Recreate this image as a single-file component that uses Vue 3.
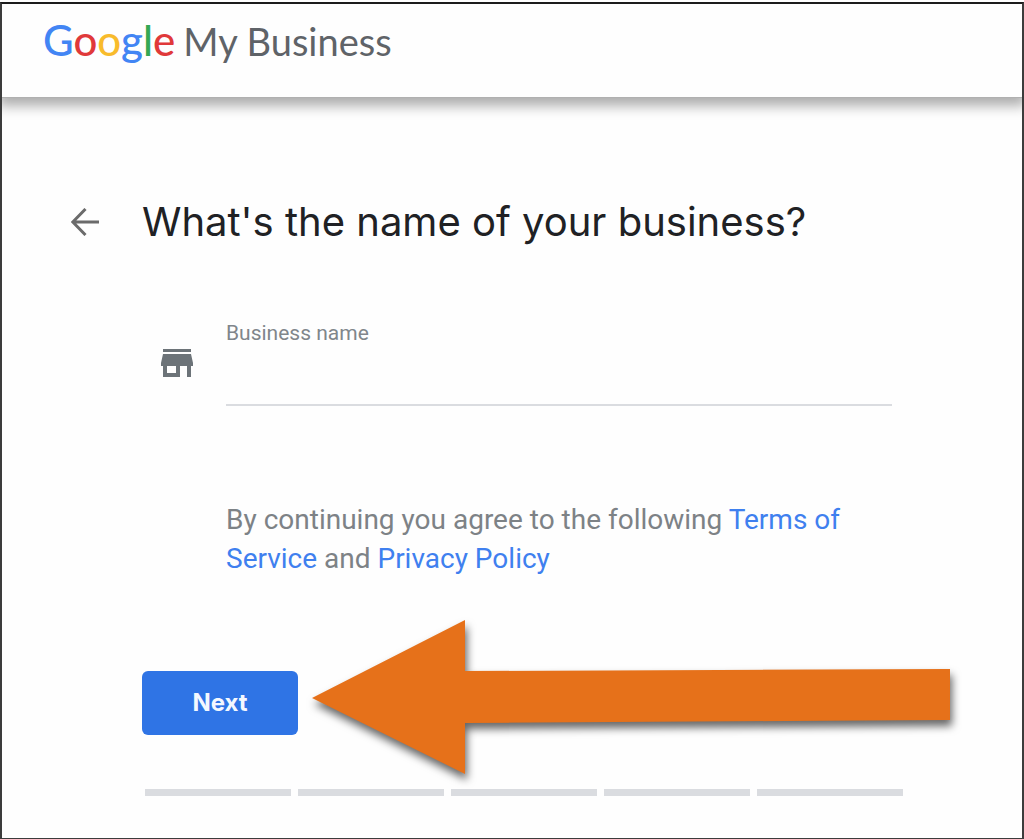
<script setup>
import { ref } from 'vue'

const businessName = ref('')
const logoLetters = [
  { char: 'G', tone: 'blue' },
  { char: 'o', tone: 'red' },
  { char: 'o', tone: 'yellow' },
  { char: 'g', tone: 'blue' },
  { char: 'l', tone: 'green' },
  { char: 'e', tone: 'red' },
]
const stepCount = 5
</script>

<template>
  <div class="page">
    <header class="topbar">
      <div class="brand">
        <span class="google"><span v-for="(l, i) in logoLetters" :key="i" :class="l.tone">{{ l.char }}</span></span>
        <span class="product">My Business</span>
      </div>
    </header>

    <main class="content">
      <div class="title-row">
        <button class="back" type="button" aria-label="Back">
          <svg viewBox="0 0 28 28" width="28" height="28" aria-hidden="true">
            <path d="M28 14H2M14.500 1L1.800 14L14.500 27" fill="none" stroke="#6b6b6b" stroke-width="3" />
          </svg>
        </button>
        <h1>What's the name of your business?</h1>
      </div>

      <form class="form" @submit.prevent>
        <div class="field">
          <svg class="store" viewBox="0 0 34 30" width="34" height="30" aria-hidden="true">
            <path d="M3 1h28v3H3zM3 6h28l2 9v3h-2v11h-4V18h-7v11H3V18H1v-3zM7 18v7h9v-7z" fill="#6c7378" fill-rule="evenodd" />
          </svg>
          <div class="control">
            <label for="business-name">Business name</label>
            <input id="business-name" v-model="businessName" type="text" autocomplete="off" />
          </div>
        </div>

        <p class="terms">
          By continuing you agree to the following <a href="#terms">Terms of Service</a> and
          <a href="#privacy">Privacy Policy</a>
        </p>

        <div class="actions">
          <button class="next" type="submit">Next</button>
          <svg class="arrow" viewBox="0 0 660 180" width="660" height="180" aria-hidden="true">
            <path d="M1 88L154 10V61L639 59V110L154 113V164Z" fill="#e6711a" />
          </svg>
        </div>

        <div class="steps" aria-hidden="true">
          <span v-for="n in stepCount" :key="n"></span>
        </div>
      </form>
    </main>
  </div>
</template>

<style>
body {
  background: #fff;
}
</style>

<style scoped>
* {
  box-sizing: border-box;
}

.page {
  display: flex;
  flex-direction: column;
  min-height: calc(100vh - 2px);
  margin-top: 2px;
  border: 2px solid #3c3c3c;
  border-top-color: #1c1c1c;
  border-bottom-width: 1px;
  background: #fefefe;
  font-family: Roboto, "Liberation Sans", sans-serif;
}

.topbar {
  height: 94px;
  padding: 10px 41px;
  background: #fefefe;
  border-bottom: 1px solid #b0b0b0;
  box-shadow: 0 4px 12px 4px rgba(0, 0, 0, 0.32);
  clip-path: inset(0 0 -24px 0);
}

.brand {
  display: flex;
  align-items: baseline;
  gap: 8px;
  font-family: Lato, "Open Sans", sans-serif;
  line-height: 52px;
  white-space: nowrap;
}

.google {
  font-size: 42px;
  font-weight: 500;
}

.product {
  font-size: 38px;
  color: #5f6368;
}

.blue { color: #4285f4; }
.red { color: #e0393a; }
.yellow { color: #f8bb2c; }
.green { color: #34a853; }

.content {
  padding: 97px 119px 42px 69px;
}

.title-row {
  display: flex;
  align-items: center;
  gap: 43px;
}

.back {
  display: flex;
  padding: 0;
  border: 0;
  background: none;
  cursor: pointer;
}

h1 {
  margin: 0;
  font-family: Inter, Lato, sans-serif;
  font-size: 40px;
  font-weight: 400;
  line-height: 54px;
  color: #202124;
}

.form {
  padding-left: 71px;
}

.field {
  display: flex;
  align-items: center;
  gap: 32px;
  margin: 70px 11px 0 18px;
}

.store {
  flex: none;
}

.control {
  flex: 1;
  min-width: 0;
}

label {
  display: block;
  font-size: 21px;
  line-height: 28px;
  color: #80868b;
}

input {
  display: block;
  width: 100%;
  height: 59px;
  padding: 0;
  border: 0;
  border-bottom: 2px solid #dadce0;
  background: none;
  font: inherit;
  font-size: 28px;
  color: #202124;
  outline: none;
}

.terms {
  margin: 94px 0 0 84px;
  max-width: 666px;
  font-size: 28px;
  line-height: 39px;
  color: #7d8286;
}

a {
  color: #3f80ef;
  text-decoration: none;
}

.actions {
  position: relative;
  display: flex;
  margin-top: 93px;
}

.next {
  width: 156px;
  height: 64px;
  padding: 0 0 2px;
  border: 0;
  border-radius: 6px;
  background: #2f74e5;
  color: #f4f8ff;
  font-family: Inter, "Open Sans", sans-serif;
  font-size: 24px;
  font-weight: 700;
  cursor: pointer;
}

.arrow {
  position: absolute;
  left: 169px;
  top: -61px;
  filter: drop-shadow(2px 6px 4px rgba(0, 0, 0, 0.6));
  pointer-events: none;
}

.steps {
  display: flex;
  gap: 7px;
  margin: 54px 0 0 3px;
}

.steps span {
  flex: 1;
  height: 7px;
  background: #dadce0;
}
</style>
